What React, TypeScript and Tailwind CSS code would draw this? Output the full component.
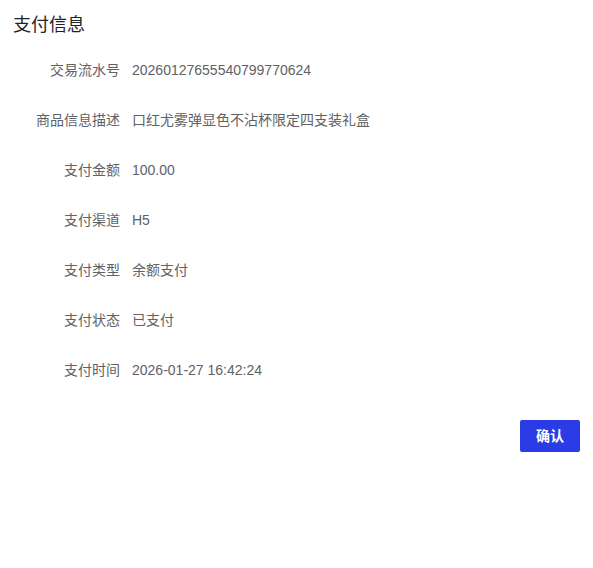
import React from "react";

const rows: [string, string][] = [
  ["交易流水号", "20260127655540799770624"],
  ["商品信息描述", "口红尤雾弹显色不沾杯限定四支装礼盒"],
  ["支付金额", "100.00"],
  ["支付渠道", "H5"],
  ["支付类型", "余额支付"],
  ["支付状态", "已支付"],
  ["支付时间", "2026-01-27 16:42:24"],
];

export default function App() {
  return (
    <div
      className="w-[593px] h-[568px] bg-white px-[13px] pt-[13px]"
      style={{ fontFamily: '"Liberation Sans", Arial, "Noto Sans CJK SC", sans-serif' }}
    >
      <div className="text-[18px] leading-[24px] text-[#1f2329]">支付信息</div>
      <div className="mt-[8px] flex flex-col">
        {rows.map(([k, v]) => (
          <div key={k} className="flex h-[50px] items-center text-[14px] text-[#606266]">
            <div className="w-[119px] shrink-0 text-right pr-[12px]">{k}</div>
            <div>{v}</div>
          </div>
        ))}
      </div>
      <div className="mt-[25px] flex justify-end">
        <button className="h-[32px] w-[60px] rounded-[2px] bg-[#2b3be5] text-[14px] font-bold text-white">
          确认
        </button>
      </div>
    </div>
  );
}
